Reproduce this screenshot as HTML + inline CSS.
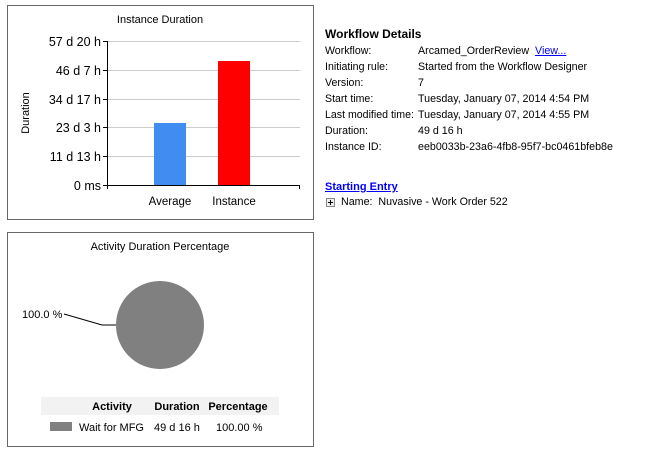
<!DOCTYPE html>
<html><head><style>
body{margin:0;width:652px;height:456px;background:#fff;font-family:"Liberation Sans",sans-serif;font-size:11px;color:#000;position:relative;overflow:hidden}
.a{position:absolute;white-space:nowrap}
.box{position:absolute;border:1px solid #666;box-sizing:border-box}
</style></head><body>
<div class="box" style="left:7px;top:5px;width:307px;height:215px"></div>
<div class="box" style="left:7px;top:232px;width:307px;height:215px"></div>
<svg class="a" style="left:0;top:0" width="320" height="456" font-family="Liberation Sans, sans-serif">
<text x="160" y="23" font-size="11" text-anchor="middle">Instance Duration</text>
<g stroke="#ccc" stroke-width="1">
<line x1="107" y1="41.5" x2="300" y2="41.5"/><line x1="107" y1="70.5" x2="300" y2="70.5"/><line x1="107" y1="99.5" x2="300" y2="99.5"/><line x1="107" y1="127.5" x2="300" y2="127.5"/><line x1="107" y1="156.5" x2="300" y2="156.5"/>
</g>
<rect x="154" y="123" width="32" height="62" fill="#418cf0"/>
<rect x="218" y="61" width="32" height="124" fill="#ff0000"/>
<g stroke="#000" stroke-width="1">
<line x1="107.5" y1="41" x2="107.5" y2="186"/><line x1="103" y1="185.5" x2="300" y2="185.5"/>
<line x1="103" y1="41.5" x2="107" y2="41.5"/><line x1="103" y1="70.5" x2="107" y2="70.5"/><line x1="103" y1="99.5" x2="107" y2="99.5"/><line x1="103" y1="127.5" x2="107" y2="127.5"/><line x1="103" y1="156.5" x2="107" y2="156.5"/>
<line x1="299.5" y1="185" x2="299.5" y2="189"/><line x1="107.5" y1="185" x2="107.5" y2="189"/>
</g>
<g font-size="12.5" text-anchor="end">
<text x="101" y="46">57 d 20 h</text><text x="101" y="75">46 d 7 h</text><text x="101" y="104">34 d 17 h</text><text x="101" y="132">23 d 3 h</text><text x="101" y="161">11 d 13 h</text><text x="101" y="190">0 ms</text>
</g>
<text transform="translate(29,113) rotate(-90)" font-size="11" text-anchor="middle">Duration</text>
<text x="170" y="205" font-size="11.5" text-anchor="middle">Average</text>
<text x="234" y="205" font-size="11.5" text-anchor="middle">Instance</text>

<text x="160" y="250" font-size="11" text-anchor="middle">Activity Duration Percentage</text>
<circle cx="160" cy="325" r="44" fill="#808080"/>
<polyline points="64,314 102,325 116,325" fill="none" stroke="#000" stroke-width="1"/>
<text x="22" y="318" font-size="11">100.0 %</text>
<rect x="41" y="397" width="238" height="18" fill="#f2f2f2"/>
<g font-size="11" font-weight="bold" text-anchor="middle">
<text x="112" y="410">Activity</text><text x="177" y="410">Duration</text><text x="238" y="410">Percentage</text>
</g>
<rect x="50" y="422" width="22" height="9" fill="#808080"/>
<g font-size="11"><text x="79" y="431">Wait for MFG</text><text x="154" y="431">49 d 16 h</text><text x="216" y="431">100.00 %</text></g>
</svg>
<div class="a" style="left:325px;top:27px;font-weight:bold;font-size:12px">Workflow Details</div>
<div class="a" style="left:325px;top:43px;line-height:16px;font-size:10.6px">Workflow:<br>Initiating rule:<br>Version:<br>Start time:<br>Last modified time:<br>Duration:<br>Instance ID:</div>
<div class="a" style="left:418px;top:43px;line-height:16px;font-size:10.7px">Arcamed_OrderReview &nbsp;<span style="color:#00f;text-decoration:underline">View...</span><br>Started from the Workflow Designer<br>7<br>Tuesday, January 07, 2014 4:54 PM<br>Tuesday, January 07, 2014 4:55 PM<br>49 d 16 h<br>eeb0033b-23a6-4fb8-95f7-bc0461bfeb8e</div>
<div class="a" style="left:325px;top:181px;font-weight:bold;color:#00f;text-decoration:underline">Starting Entry</div>
<div class="a" style="left:326px;top:198px;width:7px;height:7px;border:1px solid #888;background:#eee"></div>
<div class="a" style="left:328px;top:202px;width:5px;height:1px;background:#000"></div>
<div class="a" style="left:330px;top:200px;width:1px;height:5px;background:#000"></div>
<div class="a" style="left:341px;top:196px;font-size:10.7px">Name:&nbsp; Nuvasive - Work Order 522</div>
</body></html>
